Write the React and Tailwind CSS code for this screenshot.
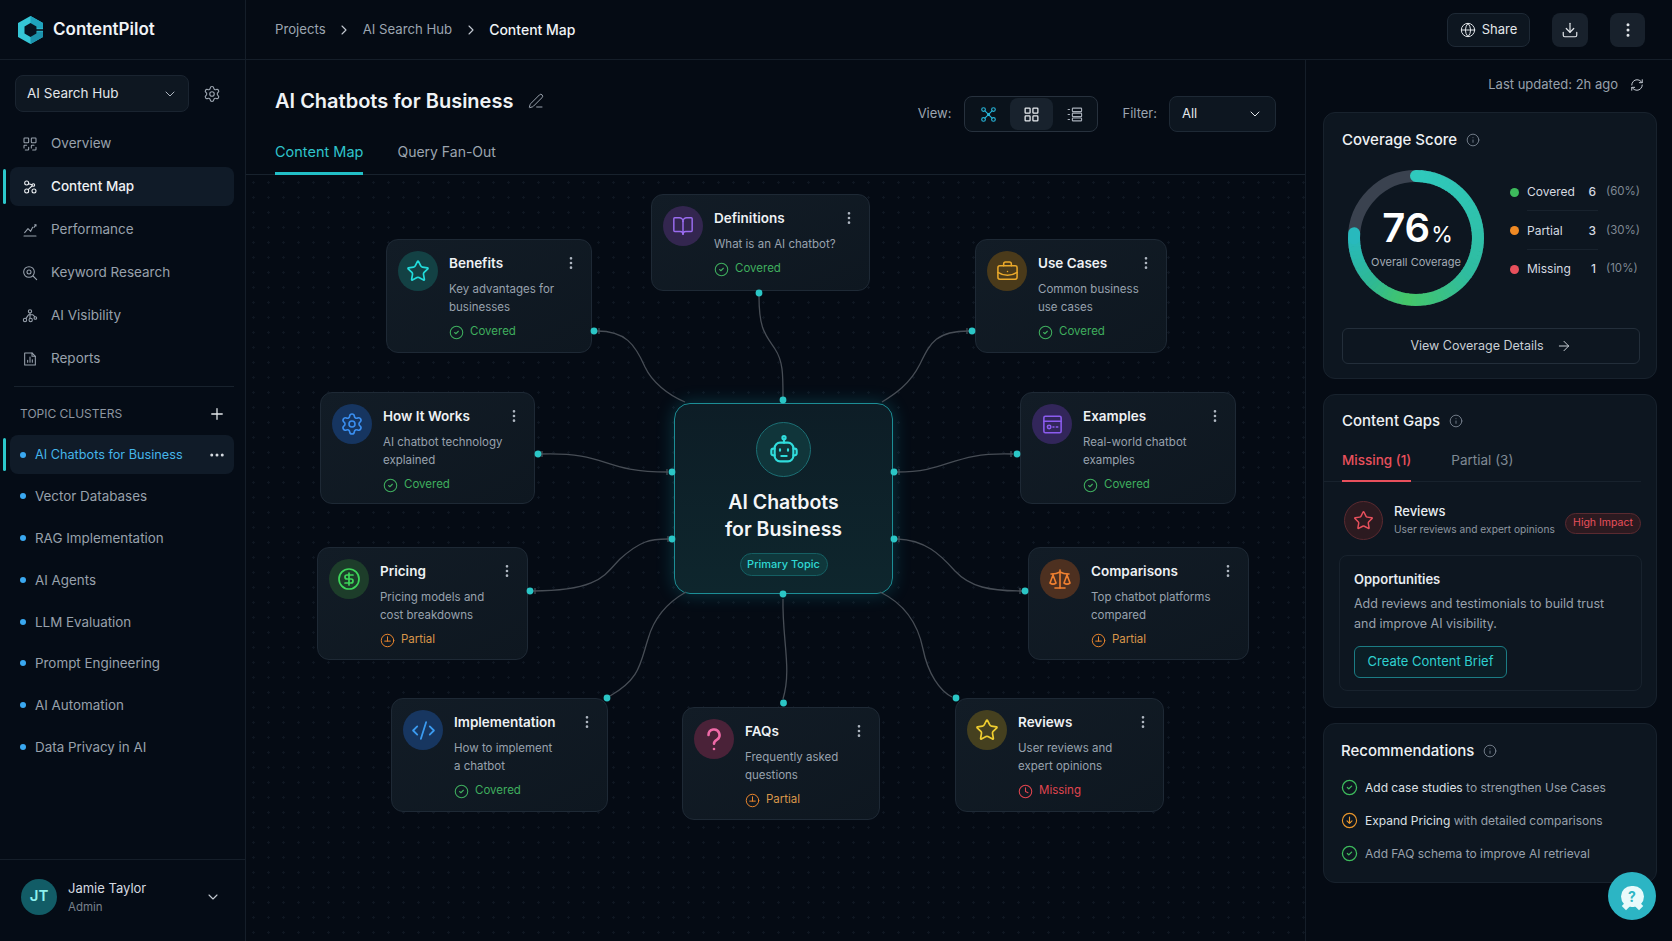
import {
  ArrowRight, BookOpen, BriefcaseBusiness, ChevronDown, ChevronRight, CircleCheck, CodeXml,
  Download, Ellipsis, EllipsisVertical, Globe, Info, LayoutGrid, PenLine, Plus, RefreshCw, Scale,
  Settings, CircleDollarSign, Star, Clock,
} from "lucide-react";

const Ico = ({ children, className = "w-4 h-4" }) => (
  <svg viewBox="0 0 24 24" fill="none" stroke="currentColor" strokeWidth="1.6" strokeLinecap="round" strokeLinejoin="round" className={className}>
    {children}
  </svg>
);

const OverviewIcon = () => (
  <Ico>
    <rect x="3" y="3" width="7" height="7" rx="1" />
    <rect x="14" y="3" width="7" height="7" rx="1" />
    <path d="M3 18v-3a1 1 0 0 1 1-1h3M10 17v3a1 1 0 0 1-1 1H5M14 18v-3a1 1 0 0 1 1-1h3M21 17v3a1 1 0 0 1-1 1h-4" />
  </Ico>
);
const MapIcon = () => (
  <Ico>
    <circle cx="7" cy="6" r="3" />
    <circle cx="17" cy="9" r="2" />
    <circle cx="7" cy="18" r="3" />
    <circle cx="18" cy="18" r="3" />
    <path d="M10 7l5 1.5M9.5 15.5L15 10.5" />
  </Ico>
);
const PerfIcon = () => (
  <Ico>
    <path d="M3 21h18M4 16l5-6 4 4 3-6M18 8l3-4M19 4h2v2" />
  </Ico>
);
const KeywordIcon = () => (
  <Ico>
    <circle cx="10.5" cy="10.5" r="8" />
    <circle cx="10.5" cy="10.5" r="3" />
    <path d="M16.5 16.5L22 22" />
  </Ico>
);
const VisibilityIcon = () => (
  <Ico>
    <circle cx="12" cy="5" r="2.5" />
    <circle cx="4.5" cy="18" r="2.5" />
    <circle cx="13" cy="18" r="2.5" />
    <circle cx="20" cy="15" r="2" />
    <path d="M12 8v7M6 15.5L10 10h6l3 3" />
  </Ico>
);
const ReportIcon = () => (
  <Ico>
    <path d="M4 3h11l5 5v13H4z" />
    <path d="M15 3v5h5M8.5 17v-3M12 17V9M15.5 17v-4" />
  </Ico>
);
const NetworkIcon = () => (
  <Ico className="w-[17px] h-[17px]">
    <circle cx="5" cy="5" r="2.6" />
    <circle cx="19" cy="5" r="2.6" />
    <circle cx="5" cy="19" r="2.6" />
    <circle cx="19" cy="19" r="2.6" />
    <circle cx="12" cy="12" r="1.4" />
    <path d="M7 7l10 10M17 7L7 17" />
  </Ico>
);
const ListIcon = () => (
  <Ico className="w-[17px] h-[17px]">
    <rect x="9" y="3" width="13" height="5" rx="1" />
    <rect x="9" y="10" width="13" height="5" rx="1" />
    <rect x="9" y="17" width="13" height="4" rx="1" />
    <path d="M3 5h2M3 12h2M3 19h2" />
  </Ico>
);
const PartialIcon = ({ className = "w-[15px] h-[15px] text-[#e8842c]" }) => (
  <Ico className={className}>
    <circle cx="12" cy="12" r="10" />
    <path d="M12 6v7M7.5 13h9" />
  </Ico>
);
const QuestionIcon = ({ className }) => (
  <svg viewBox="0 0 24 24" fill="none" stroke="currentColor" strokeWidth="2.6" strokeLinecap="round" className={className}>
    <path d="M6.5 8a5.5 5.5 0 1 1 8.2 4.8c-1.8 1-2.7 2-2.7 4" />
    <path d="M12 22h.01" />
  </svg>
);
const BrowserIcon = () => (
  <Ico className="w-[23px] h-[23px]">
    <rect x="3" y="3.5" width="18" height="17" rx="1.5" />
    <path d="M3 8.5h18M12.5 14.5h1M16 14.5h1.5" />
    <circle cx="8.5" cy="14.5" r="1.8" />
  </Ico>
);
const RobotIcon = () => (
  <Ico className="w-8 h-8">
    <circle cx="12" cy="2.8" r="1.2" />
    <path d="M12 4v2.5" />
    <rect x="5" y="6.5" width="14" height="14" rx="4" />
    <path d="M5 11H4a1.5 1.5 0 0 0-1.5 1.5v2A1.5 1.5 0 0 0 4 16h1M19 11h1a1.5 1.5 0 0 1 1.5 1.5v2A1.5 1.5 0 0 1 20 16h-1" />
    <path d="M9 11.5v1M15 11.5v1M10 16.5h4" />
  </Ico>
);

const Logo = () => (
  <svg viewBox="0 0 25 28" className="w-[25px] h-[28px]">
    <polygon points="12.5,0 25,7 25,21 12.5,28 0,21 0,7" fill="#35c6d6" />
    <polygon points="12.5,0 25,7 25,12.5 18.5,12.5 18.5,10.5 12.5,7" fill="#1fa3bd" />
    <polygon points="25,15.5 25,21 12.5,28 12.5,21 18.5,17.5 18.5,15.5" fill="#1c92ac" />
    <polygon points="12.5,7 18.5,10.5 18.5,17.5 12.5,21 6.5,17.5 6.5,10.5" fill="#071320" />
    <rect x="18" y="13.2" width="7" height="1.6" fill="#071320" />
  </svg>
);

const navItems = [
  { label: "Overview", icon: <OverviewIcon /> },
  { label: "Content Map", icon: <MapIcon />, active: true },
  { label: "Performance", icon: <PerfIcon /> },
  { label: "Keyword Research", icon: <KeywordIcon /> },
  { label: "AI Visibility", icon: <VisibilityIcon /> },
  { label: "Reports", icon: <ReportIcon /> },
];

const clusters = ["AI Chatbots for Business", "Vector Databases", "RAG Implementation", "AI Agents", "LLM Evaluation", "Prompt Engineering", "AI Automation", "Data Privacy in AI"];

const nodes = [
  { title: "Definitions", lines: ["What is an AI chatbot?"], status: "covered", pos: "left-[405px] top-[19px] w-[219px] h-[97px]", circle: "bg-[#33264f]", color: "text-[#9a6cf0]", icon: <BookOpen className="w-[22px] h-[22px]" strokeWidth={1.6} /> },
  { title: "Benefits", lines: ["Key advantages for", "businesses"], status: "covered", pos: "left-[140px] top-[64px] w-[206px] h-[114px]", circle: "bg-[#134144]", color: "text-[#22dcdc]", icon: <Star className="w-[24px] h-[24px]" strokeWidth={1.7} /> },
  { title: "Use Cases", lines: ["Common business", "use cases"], status: "covered", pos: "left-[729px] top-[64px] w-[192px] h-[114px]", circle: "bg-[#4a3a1a]", color: "text-[#eaa92b]", icon: <BriefcaseBusiness className="w-[23px] h-[23px]" strokeWidth={1.6} /> },
  { title: "How It Works", lines: ["AI chatbot technology", "explained"], status: "covered", pos: "left-[74px] top-[217px] w-[215px] h-[112px]", circle: "bg-[#163560]", color: "text-[#3b8ff0]", icon: <Settings className="w-[24px] h-[24px]" strokeWidth={1.6} /> },
  { title: "Examples", lines: ["Real-world chatbot", "examples"], status: "covered", pos: "left-[774px] top-[217px] w-[216px] h-[112px]", circle: "bg-[#32265a]", color: "text-[#8c5cf0]", icon: <BrowserIcon /> },
  { title: "Pricing", lines: ["Pricing models and", "cost breakdowns"], status: "partial", pos: "left-[71px] top-[372px] w-[211px] h-[113px]", circle: "bg-[#1d3d2a]", color: "text-[#3ed65a]", icon: <CircleDollarSign className="w-[24px] h-[24px]" strokeWidth={1.7} /> },
  { title: "Comparisons", lines: ["Top chatbot platforms", "compared"], status: "partial", pos: "left-[782px] top-[372px] w-[221px] h-[113px]", circle: "bg-[#4d3020]", color: "text-[#f08030]", icon: <Scale className="w-[24px] h-[24px]" strokeWidth={1.6} /> },
  { title: "Implementation", lines: ["How to implement", "a chatbot"], status: "covered", pos: "left-[145px] top-[523px] w-[217px] h-[114px]", circle: "bg-[#173660]", color: "text-[#3b9bf0]", icon: <CodeXml className="w-[25px] h-[25px]" strokeWidth={1.7} /> },
  { title: "FAQs", lines: ["Frequently asked", "questions"], status: "partial", pos: "left-[436px] top-[532px] w-[198px] h-[113px]", circle: "bg-[#4a2238]", color: "text-[#f06aa8]", icon: <QuestionIcon className="w-[24px] h-[24px]" /> },
  { title: "Reviews", lines: ["User reviews and", "expert opinions"], status: "missing", pos: "left-[709px] top-[523px] w-[209px] h-[114px]", circle: "bg-[#45401f]", color: "text-[#f0ce30]", icon: <Star className="w-[24px] h-[24px]" strokeWidth={1.7} /> },
];

// connectors, in page coordinates
const links = [
  "M597 332 C625 332 635 345 645 368 C652 383 668 396 685 403",
  "M759 297 C759 330 765 335 775 350 C783 362 783 375 783 398",
  "M541 455 C610 453 600 473 668 473",
  "M533 592 C600 592 605 575 620 560 C640 542 650 540 668 540",
  "M610 697 C640 680 640 665 648 640 C655 615 670 602 686 593",
  "M783 700 C792 670 782 640 783 600",
  "M969 332 C935 332 930 345 920 365 C910 385 895 395 882 403",
  "M1013 455 C950 453 950 473 897 473",
  "M897 540 C925 541 940 555 955 572 C970 588 990 592 1022 592",
  "M880 593 C905 605 918 625 923 650 C928 675 940 692 952 698",
];
const dots = [[594, 332], [759, 294], [538, 455], [530, 592], [607, 699], [783.5, 704], [972, 332], [1017, 455], [1025, 592], [956, 699], [783, 401], [672, 473], [672, 540], [894, 473], [894, 540], [783, 595]];
const ticks = ["M599 329v6", "M542 452v6", "M535 589v6", "M967 329v6", "M1011 452v6", "M1020 589v6", "M667 470v6", "M668 537v6", "M899 470v6", "M899 537v6"];

const Status = ({ status }) => {
  if (status === "covered")
    return (
      <div className="flex items-center gap-[6px] text-[11.5px] text-[#3fae5e] h-[18px]">
        <CircleCheck className="w-[15px] h-[15px]" strokeWidth={1.7} />
        Covered
      </div>
    );
  if (status === "partial")
    return (
      <div className="flex items-center gap-[6px] text-[11.5px] text-[#d9964a] h-[18px]">
        <PartialIcon />
        Partial
      </div>
    );
  return (
    <div className="flex items-center gap-[6px] text-[11.5px] text-[#e0454f] h-[18px]">
      <Clock className="w-[15px] h-[15px]" strokeWidth={1.7} />
      Missing
    </div>
  );
};

const Node = ({ node }) => (
  <div className={`absolute ${node.pos} flex rounded-xl border border-[#1e2935] bg-gradient-to-br from-[#121c26] to-[#0e1720] pt-[11px] pl-[11px] pr-[12px]`}>
    <div className={`w-10 h-10 shrink-0 rounded-full flex items-center justify-center ${node.circle} ${node.color}`}>{node.icon}</div>
    <div className="ml-[11px] flex-1">
      <div className="flex items-center justify-between h-6">
        <span className="text-[13.5px] font-semibold text-[#eef1f4]">{node.title}</span>
        <EllipsisVertical className="w-4 h-4 text-[#aeb6c0]" />
      </div>
      <div className="mt-[5px] text-[11.5px] leading-[18px] text-[#98a2ae]">
        {node.lines.map((l) => (
          <div key={l}>{l}</div>
        ))}
      </div>
      <div className="mt-[7px]">
        <Status status={node.status} />
      </div>
    </div>
  </div>
);

const Donut = () => {
  const stops = [[0, [47, 201, 189]], [0.45, [47, 188, 160]], [0.68, [69, 199, 104]], [0.82, [46, 184, 150]], [1, [39, 185, 192]]];
  const colorAt = (t) => {
    let i = 0;
    while (i < stops.length - 2 && t > stops[i + 1][0]) i++;
    const [a, ca] = stops[i];
    const [b, cb] = stops[i + 1];
    const k = (t - a) / (b - a);
    return `rgb(${ca.map((c, j) => Math.round(c + (cb[j] - c) * k)).join(",")})`;
  };
  const total = 0.76 * Math.PI * 2;
  const pt = (a) => [70 + 62 * Math.sin(a), 70 - 62 * Math.cos(a)];
  const segs = [];
  for (let i = 0; i < 70; i++) {
    const [x1, y1] = pt((total * i) / 70);
    const [x2, y2] = pt((total * (i + 1.2)) / 70);
    segs.push(<path key={i} d={`M${x1} ${y1}L${x2} ${y2}`} stroke={colorAt(i / 70)} strokeWidth="12" strokeLinecap={i === 0 || i === 69 ? "round" : "butt"} fill="none" />);
  }
  return (
    <div className="relative w-[140px] h-[140px] shrink-0">
      <svg viewBox="0 0 140 140" className="w-[140px] h-[140px]">
        <circle cx="70" cy="70" r="62" fill="none" stroke="#3a424f" strokeWidth="12" />
        {segs}
      </svg>
      <div className="absolute inset-0 flex flex-col items-center pt-[36px]">
        <div className="flex items-baseline leading-none text-white ml-[3px]">
          <span className="text-[40px] font-semibold leading-[48px]">76</span>
          <span className="text-[22px] ml-[1px]">%</span>
        </div>
        <span className="text-[11px] leading-4 mt-[2px] text-[#a4acb6]">Overall Coverage</span>
      </div>
    </div>
  );
};

const Card = ({ title, children, className }) => (
  <div className={`rounded-xl border border-[#18222d] bg-[#0d1620] ${className}`}>
    <div className="flex items-center gap-[9px]">
      <span className="text-[15px] font-medium leading-5 text-[#eef1f4]">{title}</span>
      <Info className="w-[14px] h-[14px] text-[#7d8793]" strokeWidth={1.5} />
    </div>
    {children}
  </div>
);

const LegendRow = ({ dot, label, n, pct, line }) => (
  <div className="relative flex items-center h-[38.5px] text-xs">
    <span className={`w-[9px] h-[9px] rounded-full ${dot}`} />
    <span className="w-[61px] ml-[8px] text-[#d5dae0]">{label}</span>
    <span className="w-[8px] text-right text-[#d5dae0] font-medium">{n}</span>
    <span className="ml-[10px] text-[11.5px] text-[#7f8994]">{pct}</span>
    {line && <span className="absolute left-[17px] right-[42px] bottom-0 h-px bg-[#18222d]" />}
  </div>
);

const App = () => {
  return (
    <div className="flex h-screen overflow-hidden bg-[#050b14] font-[family-name:Inter,sans-serif] text-[#9ca5b0]">
      <aside className="w-[246px] shrink-0 flex flex-col border-r border-[#151e29] bg-[#050c16]">
        <div className="h-[60px] shrink-0 flex items-center pl-[18px] gap-[10px] border-b border-[#151e29]">
          <Logo />
          <span className="text-[17px] font-semibold text-[#f0f3f6]">ContentPilot</span>
        </div>
        <div className="flex items-center pl-[15px] mt-[15px]">
          <button className="w-[174px] h-[37px] flex items-center justify-between pl-[11px] pr-[10px] rounded-lg border border-[#1a2430] bg-[#0e1721] text-[13.5px] text-[#e2e6ea]">
            AI Search Hub
            <ChevronDown className="w-4 h-4 text-[#aeb6c0]" strokeWidth={1.5} />
          </button>
          <Settings className="ml-[14px] w-[18px] h-[18px] text-[#9ca5b0]" strokeWidth={1.5} />
        </div>
        <nav className="mt-3 flex flex-col gap-1">
          {navItems.map((item) => (
            <div key={item.label} className="relative ml-[10px] w-[224px]">
              {item.active && <span className="absolute -left-[7px] top-[2px] bottom-[2px] w-[3px] rounded-full bg-[#2cc8cc]" />}
              <div className={`h-[39px] flex items-center gap-[13px] pl-3 rounded-lg text-[13.5px] ${item.active ? "bg-[#101b28] text-[#eef1f4] font-medium" : "text-[#98a1ac]"}`}>
                {item.icon}
                {item.label}
              </div>
            </div>
          ))}
        </nav>
        <div className="mt-2 mx-[14px] w-[220px] h-px bg-[#18222d]" />
        <div className="flex items-center justify-between pl-5 pr-[19px] pt-[18px] pb-[12px]">
          <span className="text-xs leading-4 text-[#8d96a1]">TOPIC CLUSTERS</span>
          <Plus className="w-[18px] h-[18px] text-[#e2e6ea]" strokeWidth={1.7} />
        </div>
        <div className="flex flex-col gap-[2.8px]">
          {clusters.map((name, i) => (
            <div key={name} className="relative ml-[10px] w-[224px]">
              {i === 0 && <span className="absolute -left-[7px] top-[3px] bottom-[3px] w-[3px] rounded-full bg-[#2cc8cc]" />}
              <div className={`h-[39px] flex items-center pl-[10px] pr-[8px] rounded-lg ${i === 0 ? "text-[12.7px] bg-[#101b28] text-[#45b5ea]" : "text-[13.4px] text-[#98a1ac]"}`}>
                <span className="w-[6px] h-[6px] rounded-full bg-[#3aa8f0]" />
                <span className="ml-[9px] flex-1">{name}</span>
                {i === 0 && <Ellipsis className="w-[18px] h-[18px] text-[#d5dae0]" />}
              </div>
            </div>
          ))}
        </div>
        <div className="mt-auto h-[82px] shrink-0 flex items-center border-t border-[#151e29] pl-[21px] pr-[24px] pb-2">
          <div className="w-9 h-9 rounded-full bg-[#125c66] flex items-center justify-center text-[15px] font-semibold text-[#8ef0ee]">JT</div>
          <div className="ml-[11px] flex-1 -mt-[1px]">
            <div className="text-[13px] leading-5 text-[#d5dae0]">Jamie Taylor</div>
            <div className="mt-[1px] text-[11.5px] leading-4 text-[#78818c]">Admin</div>
          </div>
          <ChevronDown className="w-4 h-4 text-[#c4cad2]" strokeWidth={1.6} />
        </div>
      </aside>

      <div className="flex-1 flex flex-col min-w-0">
        <header className="h-[60px] shrink-0 flex items-center justify-between border-b border-[#151e29] pl-[29px] pr-[27px]">
          <div className="flex items-center text-[13.2px]">
            <span>Projects</span>
            <ChevronRight className="w-4 h-4 mx-[10.5px] text-[#c4cad2]" strokeWidth={1.6} />
            <span>AI Search Hub</span>
            <ChevronRight className="w-4 h-4 mx-[10.5px] text-[#c4cad2]" strokeWidth={1.6} />
            <span className="text-sm font-medium text-[#f0f3f6]">Content Map</span>
          </div>
          <div className="flex items-center gap-[22px]">
            <button className="w-[83px] h-[34px] flex items-center justify-center gap-[6px] rounded-lg border border-[#1e2935] bg-[#0d1620] text-[13px] text-[#e2e6ea]">
              <Globe className="w-4 h-4" strokeWidth={1.5} />
              Share
            </button>
            <button className="w-9 h-[34px] flex items-center justify-center rounded-lg bg-[#18212c] text-[#e2e6ea]">
              <Download className="w-[18px] h-[18px]" strokeWidth={1.6} />
            </button>
            <button className="w-[35px] h-[34px] flex items-center justify-center rounded-lg bg-[#18212c] text-[#e2e6ea]">
              <EllipsisVertical className="w-[18px] h-[18px]" />
            </button>
          </div>
        </header>

        <div className="flex-1 flex min-h-0">
          <main className="w-[1060px] shrink-0 flex flex-col border-r border-[#151e29]">
            <div className="h-[115px] shrink-0 flex justify-between border-b border-[#18222d] pl-[29px] pr-[29px]">
              <div>
                <div className="mt-[26px] h-[30px] flex items-center gap-[15px]">
                  <h1 className="text-[20px] font-semibold text-[#f0f3f6]">AI Chatbots for Business</h1>
                  <PenLine className="w-4 h-4 text-[#9ca5b0]" strokeWidth={1.5} />
                </div>
                <div className="mt-[26px] flex gap-[34px] text-[14.5px] leading-5">
                  <span className="pb-[10px] border-b-[3px] border-[#22bfc7] text-[#2fc4cc]">Content Map</span>
                  <span className="text-[14px]">Query Fan-Out</span>
                </div>
              </div>
              <div className="mt-[36px] flex items-start text-[13px]">
                <span className="h-9 flex items-center mr-[13px]">View:</span>
                <div className="w-[134px] h-9 flex items-center justify-between px-[2px] rounded-lg border border-[#27313d] bg-[#0a121b]">
                  <span className="w-[42px] h-8 flex items-center justify-center text-[#28b4d8]"><NetworkIcon /></span>
                  <span className="w-[43px] h-8 flex items-center justify-center rounded-lg bg-[#18222d] text-[#e8ecf0]"><LayoutGrid className="w-[17px] h-[17px]" strokeWidth={1.8} /></span>
                  <span className="w-[42px] h-8 flex items-center justify-center text-[#a8b0ba]"><ListIcon /></span>
                </div>
                <span className="h-9 flex items-center ml-6 mr-3">Filter:</span>
                <div className="w-[107px] h-9 flex items-center justify-between pl-3 pr-[12px] rounded-lg border border-[#1e2935] bg-[#0d1620] text-[#e2e6ea]">
                  All
                  <ChevronDown className="w-4 h-4" strokeWidth={1.5} />
                </div>
              </div>
            </div>

            <div className="relative flex-1 bg-[radial-gradient(circle,#0f1722_1px,transparent_1.2px)] bg-size-[15px_15px]">
              {nodes.map((node) => (
                <Node key={node.title} node={node} />
              ))}

              <div className="absolute left-[428px] top-[228px] w-[219px] h-[191px] flex flex-col items-center rounded-2xl border-[1.5px] border-[#1c8e96] bg-gradient-to-b from-[#0d1d26] to-[#0e262d] shadow-[0_0_18px_rgba(34,211,238,0.22)] pt-[18px]">
                <div className="w-[55px] h-[55px] rounded-full border border-[#1c6f74] bg-[#10353a] flex items-center justify-center text-[#30dcdc]">
                  <RobotIcon />
                </div>
                <div className="mt-[12px] text-center text-[19.5px] leading-[26.5px] font-semibold text-[#f4f6f8]">
                  AI Chatbots
                  <br />
                  for Business
                </div>
                <span className="mt-[11px] w-[88px] h-[23px] flex items-center justify-center rounded-full border border-[#155f63] bg-[#0f383c] text-[11px] font-medium text-[#2fd8d4]">Primary Topic</span>
              </div>

              {/* page coordinates: canvas sits at 246,176 */}
              <svg viewBox="246 176 1060 765" className="absolute left-0 top-0 w-[1060px] h-[765px] pointer-events-none">
                {links.map((d) => (
                  <path key={d} d={d} fill="none" stroke="#474d55" strokeWidth="1.3" />
                ))}
                {ticks.map((d) => (
                  <path key={d} d={d} stroke="#474d55" strokeWidth="1.3" />
                ))}
                {dots.map(([x, y]) => (
                  <circle key={`${x}-${y}`} cx={x} cy={y} r="3.4" fill="#2bc6c6" />
                ))}
              </svg>
            </div>
          </main>

          <aside className="flex-1 min-w-0 pl-[17px] pr-[15px]">
            <div className="h-[49px] mb-[3px] flex items-center justify-end gap-[12px] pr-[13px] text-[13px] text-[#98a1ac]">
              Last updated: 2h ago
              <RefreshCw className="w-[14px] h-[14px] text-[#c4cad2]" strokeWidth={1.7} />
            </div>
            <Card title="Coverage Score" className="h-[267px] pt-[17px] pl-[18px] pr-[16px]">
              <div className="mt-[18px] ml-[4px] flex items-center">
                <Donut />
                <div className="ml-[24px] flex-1 mb-[15px]">
                  <LegendRow dot="bg-[#3dbb5c]" label="Covered" n="6" pct="(60%)" line />
                  <LegendRow dot="bg-[#f08a24]" label="Partial" n="3" pct="(30%)" line />
                  <LegendRow dot="bg-[#e8505c]" label="Missing" n="1" pct="(10%)" />
                </div>
              </div>
              <button className="mt-[20px] w-[298px] h-[36px] flex items-center justify-center gap-[12px] rounded-md border border-[#232e3a] text-[12.5px] text-[#c8ced5]">
                View Coverage Details
                <ArrowRight className="w-4 h-4" strokeWidth={1.5} />
              </button>
            </Card>

            <Card title="Content Gaps" className="mt-[15px] h-[314px] pt-4 pl-[18px] pr-[15px]">
              <div className="-ml-[18px] mt-[19px] pl-[18px] flex gap-[40px] border-b border-[#18222d] text-[13.5px] leading-5">
                <span className="pb-[10px] -mb-px border-b-2 border-[#e8505c] font-medium text-[#e8505c]">Missing (1)</span>
                <span className="text-[#7f8994]">Partial (3)</span>
              </div>
              <div className="mt-[19px] ml-[2px] flex items-center">
                <div className="w-[39px] h-[39px] shrink-0 rounded-full border border-[#5a2a30] bg-[#2c1a20] flex items-center justify-center text-[#e8505c]">
                  <Star className="w-[21px] h-[21px]" strokeWidth={1.7} />
                </div>
                <div className="ml-[11px] flex-1 -mt-[3px]">
                  <div className="text-[13px] font-medium leading-5 text-[#e8ecf0]">Reviews</div>
                  <div className="text-[10.2px] leading-4 text-[#8d96a1] whitespace-nowrap">User reviews and expert opinions</div>
                </div>
                <span className="mt-[5px] w-[76px] h-[21px] flex items-center justify-center rounded-full border border-[#5a2a30] bg-[#2c1a20] text-[10.5px] text-[#e8505c]">High Impact</span>
              </div>
              <div className="mt-[15px] -ml-[3px] w-[303px] h-[136px] rounded-lg border border-[#18222d] pt-[13px] pl-[14px]">
                <div className="text-[13px] font-semibold leading-5 text-[#e8ecf0]">Opportunities</div>
                <div className="mt-[5px] text-[12.5px] leading-[20px] text-[#98a1ac]">
                  Add reviews and testimonials to build trust
                  <br />
                  and improve AI visibility.
                </div>
                <button className="mt-[12px] w-[153px] h-[32px] rounded-md border border-[#1b7c84] bg-[#0b1e26] text-[13px] text-[#2fd0d0]">Create Content Brief</button>
              </div>
            </Card>

            <Card title="Recommendations" className="mt-[15px] h-[160px] pt-[17px] pl-[17px]">
              <div className="mt-[17px] flex flex-col gap-[14px] text-xs leading-[19px] text-[#98a1ac]">
                <div className="flex items-center gap-[7px]">
                  <CircleCheck className="w-[17px] h-[17px] text-[#3dbb5c]" strokeWidth={1.8} />
                  <span><span className="text-[#dde1e6]">Add case studies</span> to strengthen Use Cases</span>
                </div>
                <div className="flex items-center gap-[7px]">
                  <Ico className="w-[17px] h-[17px] text-[#e8962c]"><circle cx="12" cy="12" r="10" /><path d="M12 7v9M8.5 12.5L12 16l3.5-3.5" /></Ico>
                  <span><span className="text-[#dde1e6]">Expand Pricing</span> with detailed comparisons</span>
                </div>
                <div className="flex items-center gap-[7px]">
                  <CircleCheck className="w-[17px] h-[17px] text-[#3dbb5c]" strokeWidth={1.8} />
                  <span>Add FAQ schema to improve AI retrieval</span>
                </div>
              </div>
            </Card>
          </aside>
        </div>
      </div>

      <button className="fixed left-[1608px] top-[872px] w-12 h-12 rounded-full bg-[#2cb5c4] flex items-center justify-center">
        <span className="relative w-[23px] h-[21px] rounded-full bg-[#e8fafb] flex items-center justify-center text-[14px] font-bold text-[#2cb5c4]">
          ?
          <span className="absolute -bottom-[2px] left-[2px] w-[6px] h-[6px] rotate-45 bg-[#e8fafb]" />
          <span className="absolute -bottom-[2px] right-[2px] w-[6px] h-[6px] rotate-45 bg-[#e8fafb]" />
        </span>
      </button>
    </div>
  );
};

export default App;
